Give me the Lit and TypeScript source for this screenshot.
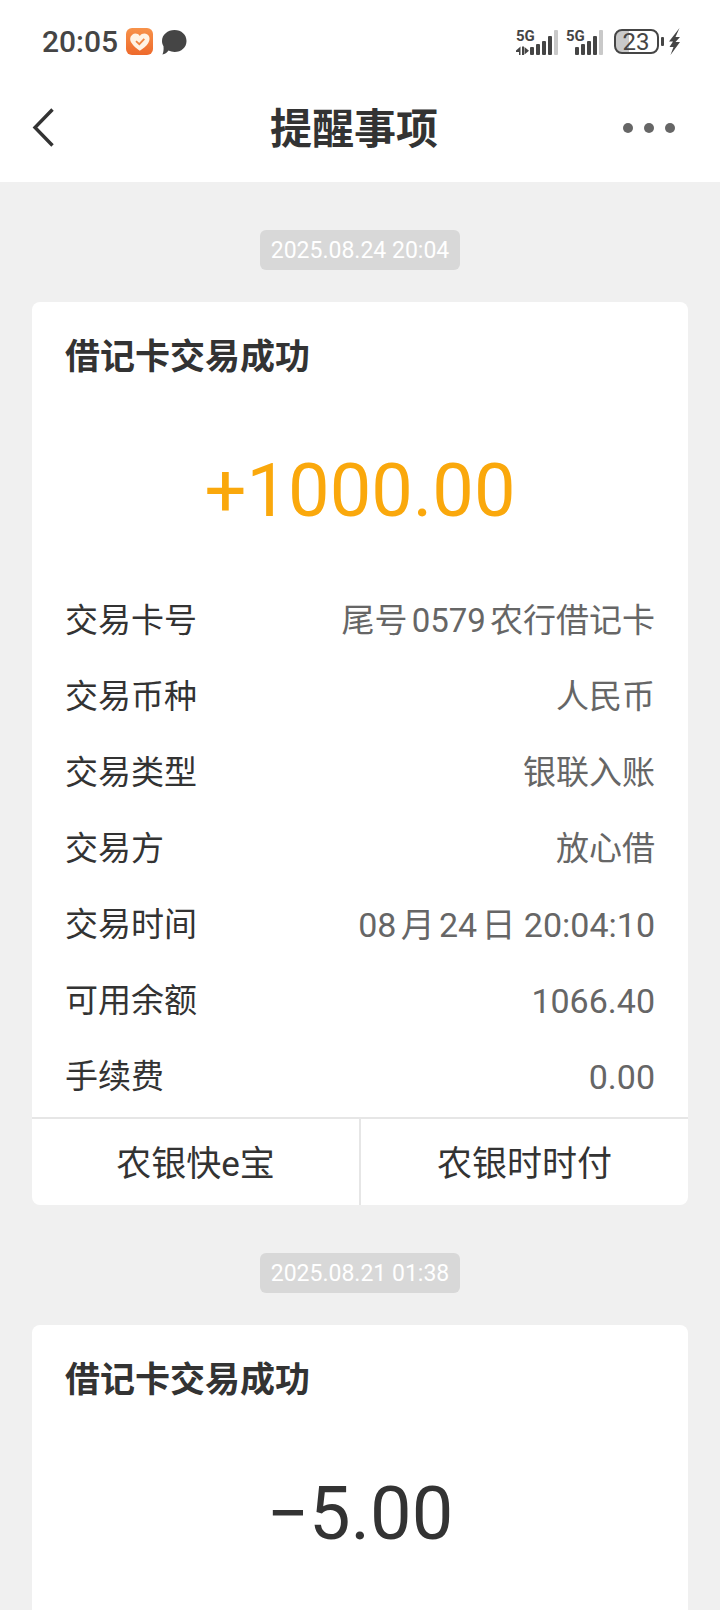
import { LitElement, html, css, svg, nothing } from "lit";
import { customElement, property } from "lit/decorators.js";
import { classMap } from "lit/directives/class-map.js";

interface Detail {
  label: string;
  value: string;
  numeric?: boolean;
}

interface Notice {
  time: string;
  title: string;
  amount: string;
  income: boolean;
  details: Detail[];
  actions: string[];
}

const notices: Notice[] = [
  {
    time: "2025.08.24 20:04",
    title: "借记卡交易成功",
    amount: "+1000.00",
    income: true,
    details: [
      { label: "交易卡号", value: "尾号0579农行借记卡" },
      { label: "交易币种", value: "人民币" },
      { label: "交易类型", value: "银联入账" },
      { label: "交易方", value: "放心借" },
      { label: "交易时间", value: "08月24日 20:04:10", numeric: true },
      { label: "可用余额", value: "1066.40", numeric: true },
      { label: "手续费", value: "0.00", numeric: true },
    ],
    actions: ["农银快e宝", "农银时时付"],
  },
  {
    time: "2025.08.21 01:38",
    title: "借记卡交易成功",
    amount: "−5.00",
    income: false,
    details: [],
    actions: [],
  },
];

@customElement("status-bar")
export class StatusBar extends LitElement {
  static styles = css`
    :host {
      display: flex;
      justify-content: space-between;
      align-items: center;
      height: 64px;
      padding: 10px 40px 0 42px;
      color: #454545;
      font-family: Roboto, "Noto Sans CJK SC", sans-serif;
    }
    .group {
      display: flex;
      align-items: center;
      gap: 8px;
    }
    .time {
      font-size: 30px;
      line-height: 36px;
      font-weight: 500;
    }
    svg {
      display: block;
    }
    .net {
      font-size: 15px;
      font-weight: 700;
      fill: currentColor;
    }
    .level {
      font-size: 24px;
      font-weight: 400;
      fill: currentColor;
    }
  `;

  private bars(x: number) {
    const tops = [19, 16, 13, 8, 2];
    return tops.map(
      (y, i) => svg`<rect x=${x + i * 6} y=${y} width="4" height=${27 - y} rx="1"
        fill=${i === 4 ? "#c9c9c9" : "currentColor"}></rect>`
    );
  }

  render() {
    return html`
      <div class="group">
        <span class="time">20:05</span>
        <svg width="27" height="28" viewBox="0 0 27 28" aria-hidden="true">
          <defs>
            <linearGradient id="warm" x1="0" y1="0" x2="0" y2="1">
              <stop offset="0" stop-color="#f7924a"></stop>
              <stop offset="1" stop-color="#ee6a2c"></stop>
            </linearGradient>
          </defs>
          <rect y="0" width="27" height="27" rx="6" fill="url(#warm)"></rect>
          <path d="M13.8 8C12 5.3 8.600 4.900 6.300 6.700C3.500 8.900 3.800 12.500 5.600 15C7.500 18 10.500 20.500 13.800 22.800C17.100 20.500 20.500 18 22.300 15C24 12.300 24.200 8.700 21.400 6.600C19 4.900 15.700 5.300 13.800 8Z" fill="#fff3e4"></path>
          <path d="M10 13.200L13.300 16.200L18.300 10.800" fill="none" stroke="#f0843f" stroke-width="1.800"></path>
        </svg>
        <svg width="27" height="26" viewBox="0 0 27 26" aria-hidden="true">
          <path d="M13.500 1C20.500 1 25.500 5.700 25.500 12C25.500 18.300 20.500 23 13.500 23C11.600 23 9.300 22.500 7.500 21.600C6 23.700 3.800 25.200 1.400 25.500C2.400 23.400 2.800 21.200 2.500 17.200C1.500 15.600 1 13.900 1 12C1 5.700 6.700 1 13.500 1Z" fill="currentColor"></path>
        </svg>
      </div>
      <div class="group">
        <svg width="42" height="28" viewBox="0 0 42 28" role="img" aria-label="5G">
          <text class="net" x="0" y="13">5G</text>
          <path d="M0 22.500L4.500 18.500V27H3V24H0ZM6 18.500H8V27H6ZM8.500 19L13 22.800L8.500 26.500Z" fill="currentColor"></path>
          ${this.bars(14)}
        </svg>
        <svg width="38" height="28" viewBox="0 0 38 28" role="img" aria-label="5G">
          <text class="net" x="0" y="13">5G</text>
          ${this.bars(9)}
        </svg>
        <svg width="68" height="28" viewBox="0 0 68 28" role="img" aria-label="23%">
          <path d="M17 3H9A6 6 0 0 0 3 9V18A6 6 0 0 0 9 24H17Z" fill="#c9c9c9"></path>
          <rect x="3" y="2" width="43" height="23" rx="7" fill="none" stroke="currentColor" stroke-width="2"></rect>
          <text class="level" x="24" y="22" text-anchor="middle">23</text>
          <rect x="49" y="9" width="3" height="9" rx="1" fill="currentColor"></rect>
          <path d="M67.500 0L57 13.500H61L57.500 19H61.500L58.500 27L68 14H63.500L68 9H63.500Z" fill="currentColor"></path>
        </svg>
      </div>
    `;
  }
}

@customElement("nav-bar")
export class NavBar extends LitElement {
  static styles = css`
    :host {
      display: grid;
      grid-template-columns: 88px 1fr 100px;
      align-items: center;
      height: 108px;
      color: #333;
    }
    h1 {
      margin: 0;
      padding-top: 4px;
      text-align: center;
      font-size: 42px;
      line-height: 60px;
      font-weight: 700;
    }
    button {
      display: flex;
      align-items: center;
      height: 60px;
      padding: 0 32px;
      border: 0;
      background: none;
      color: inherit;
    }
    .more {
      justify-content: flex-end;
      padding: 0 44px 0 0;
      color: #666;
    }
    svg {
      flex: none;
    }
  `;

  render() {
    return html`
      <button type="button" aria-label="返回">
        <svg width="24" height="40" viewBox="0 0 24 40">
          <path d="M20.500 1.500L3 19.500L20.500 37.500" fill="none" stroke="currentColor" stroke-width="3.400"></path>
        </svg>
      </button>
      <h1>提醒事项</h1>
      <button type="button" class="more" aria-label="更多">
        <svg width="54" height="12" viewBox="0 0 54 12" fill="currentColor">
          <circle cx="6" cy="6" r="5"></circle>
          <circle cx="27" cy="6" r="5"></circle>
          <circle cx="48" cy="6" r="5"></circle>
        </svg>
      </button>
    `;
  }
}

@customElement("notice-card")
export class NoticeCard extends LitElement {
  @property({ attribute: false }) notice!: Notice;

  static styles = css`
    :host {
      display: flex;
      flex-direction: column;
      align-items: stretch;
    }
    time {
      align-self: center;
      margin: 48px 0 32px;
      padding: 2px 11px 0;
      border-radius: 6px;
      background: #d8d8d8;
      color: #fff;
      font-size: 23px;
      line-height: 38px;
    }
    article {
      flex: 1;
      border-radius: 8px;
      background: #fff;
      overflow: hidden;
    }
    .running {
      border-radius: 8px 8px 0 0;
    }
    h2 {
      margin: 0;
      padding: 32px 33px 0;
      font-size: 35px;
      line-height: 48px;
      font-weight: 700;
    }
    .amount {
      margin: 0;
      padding: 59px 0 42px;
      text-align: center;
      font-size: 74px;
      line-height: 100px;
    }
    .income {
      color: #faa80c;
    }
    dl {
      margin: 0;
      padding: 0 33px 2px;
    }
    .row {
      display: flex;
      justify-content: space-between;
      font-size: 33px;
      line-height: 76px;
    }
    dd {
      margin: 0;
      color: #666;
      text-autospace: normal;
    }
    .numeric {
      font-size: 34px;
    }
    .actions {
      display: flex;
      border-top: 2px solid #e6e6e6;
    }
    button {
      flex: 1;
      height: 86px;
      padding: 0 0 4px;
      border: 0;
      background: none;
      color: inherit;
      font: inherit;
      font-size: 35px;
    }
    button + button {
      border-left: 2px solid #e6e6e6;
    }
  `;

  render() {
    const n = this.notice;
    return html`
      <time>${n.time}</time>
      <article class=${classMap({ running: !n.actions.length })}>
        <h2>${n.title}</h2>
        <p class=${classMap({ amount: true, income: n.income })}>${n.amount}</p>
        ${n.details.length
          ? html`<dl>
              ${n.details.map(
                (d) => html`<div class="row">
                  <dt>${d.label}</dt>
                  <dd class=${classMap({ numeric: !!d.numeric })}>${d.value}</dd>
                </div>`
              )}
            </dl>`
          : nothing}
        ${n.actions.length
          ? html`<div class="actions">
              ${n.actions.map((a) => html`<button type="button">${a}</button>`)}
            </div>`
          : nothing}
      </article>
    `;
  }
}

@customElement("app-root")
export class AppRoot extends LitElement {
  static styles = css`
    :host {
      display: flex;
      flex-direction: column;
      min-height: 100vh;
      background: #f0f0f0;
      color: #333;
      font-family: Roboto, "Noto Sans CJK SC", sans-serif;
    }
    header {
      background: #fff;
    }
    main {
      flex: 1;
      display: flex;
      flex-direction: column;
      padding: 0 32px;
    }
    notice-card:last-child {
      flex: 1;
    }
  `;

  render() {
    return html`
      <header>
        <status-bar></status-bar>
        <nav-bar></nav-bar>
      </header>
      <main>
        ${notices.map((n) => html`<notice-card .notice=${n}></notice-card>`)}
      </main>
    `;
  }
}
